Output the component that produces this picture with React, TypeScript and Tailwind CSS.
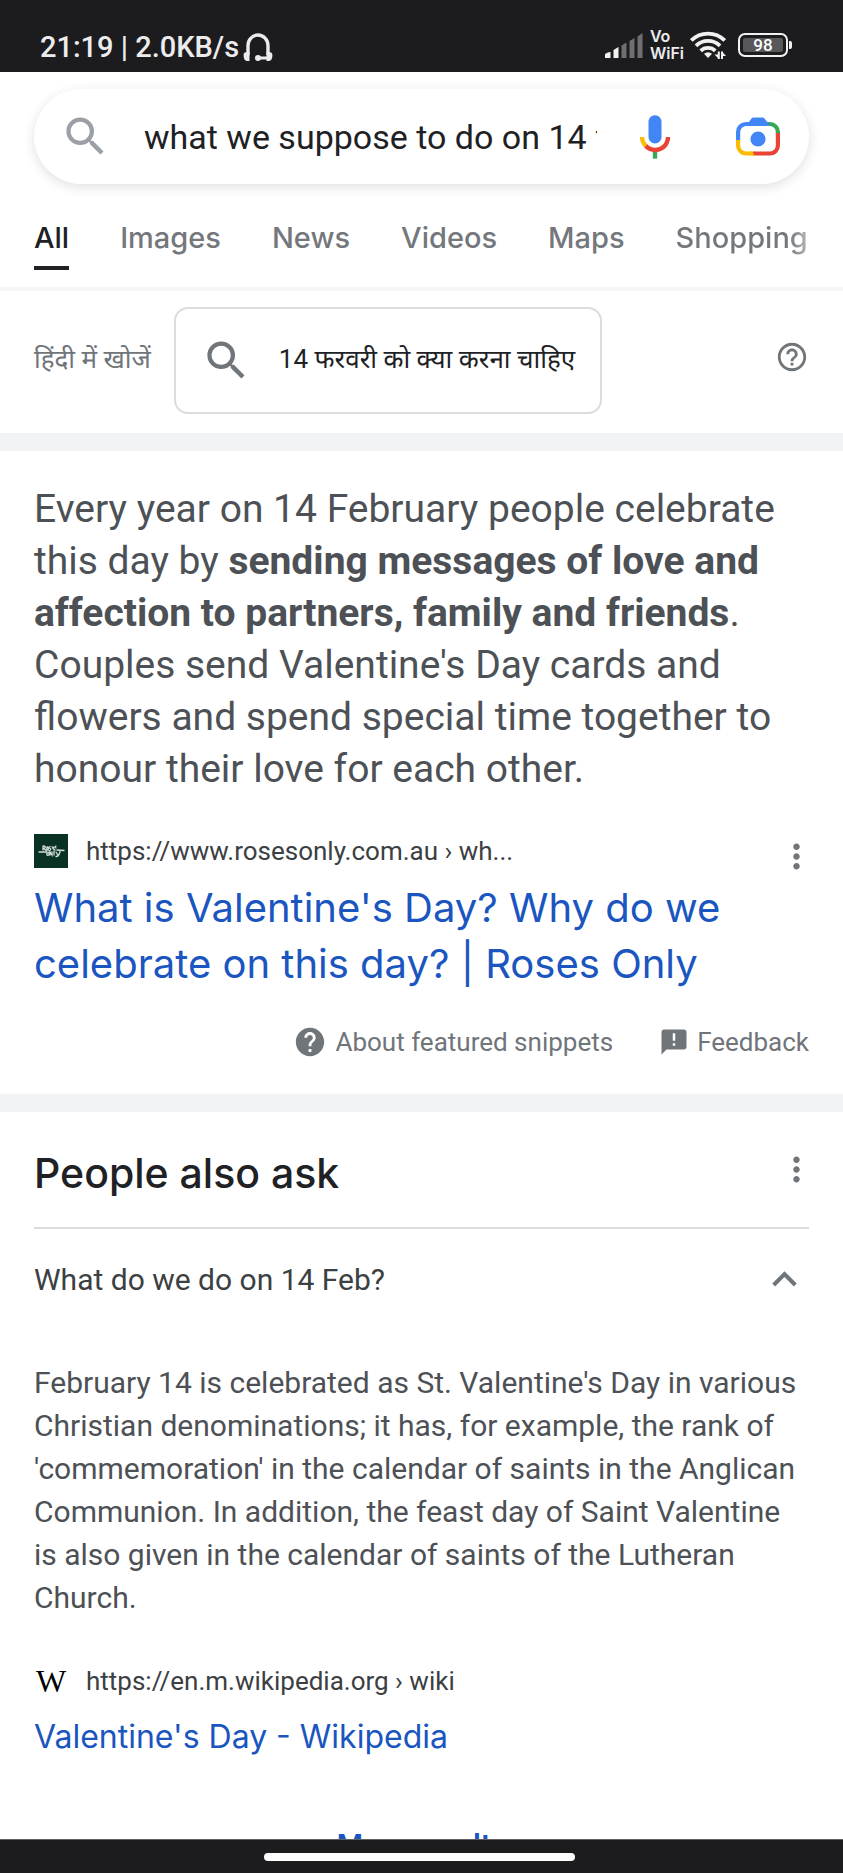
import React, { useState } from "react";
import {
  MdAnnouncement,
  MdExpandLess,
  MdHelp,
  MdHelpOutline,
  MdMoreVert,
  MdSearch,
} from "react-icons/md";

const DISPLAY = "font-[Inter,'Noto_Sans',sans-serif]";

function HeadphonesIcon() {
  return (
    <svg viewBox="0 0 30 28" className="h-[28px] w-[30px]" aria-hidden="true">
      <path
        d="M5 22V12.5a10 10.5 0 0 1 20 0V22"
        fill="none"
        stroke="#ececee"
        strokeWidth="3.4"
      />
      <path
        d="M0.6 22c0-2 1.6-3.2 5.9-3.2V28H5c-3 0-4.4-1.600-4.400-6zM29.400 22c0-2-1.600-3.200-5.900-3.200V28H25c3 0 4.400-1.600 4.400-6z"
        fill="#ececee"
      />
      <path d="M24 25h-7" stroke="#ececee" strokeWidth="3" />
      <circle cx="15" cy="25" r="3" fill="#ececee" />
    </svg>
  );
}

function SignalIcon() {
  return (
    <svg viewBox="0 0 38 25" className="h-[25px] w-[38px]" aria-hidden="true">
      <path d="M0 25v-3.500q1-2 5.500-2.500V25zM8.500 25v-8l5-3V25z" fill="#f1f1f2" />
      <path d="M16.500 25V12.500l5-3V25zM24.500 25V8l5-3V25zM32.500 25V3.500l5-3.500V25z" fill="#6f6f71" />
    </svg>
  );
}

function WifiIcon() {
  return (
    <svg viewBox="0 0 36 28" className="h-[28px] w-[36px]" aria-hidden="true">
      <g fill="none" stroke="#f1f1f2" strokeWidth="3.800">
        <path d="M1.300 9.500a23.500 23.500 0 0 1 33.400 0" />
        <path d="M6 14.800a17 17 0 0 1 24 0" />
        <path d="M10.700 19.800a10.500 10.500 0 0 1 14.600 0" />
      </g>
      <path d="M18 27l-4-4.300a6 6 0 0 1 8 0z" fill="#f1f1f2" />
      <path
        d="M28.800 20.500V28M32 28v-7.500"
        fill="none"
        stroke="#f1f1f2"
        strokeWidth="2"
      />
      <path d="M29 28l-4.500-4.500H29zM32 20.500l4 4.500h-4z" fill="#f1f1f2" />
    </svg>
  );
}

function BatteryIcon() {
  return (
    <span className="flex items-center gap-px">
      <span className="flex h-[24px] w-[50px] rounded-[7px] border-2 border-[#f1f1f2] p-[3px]">
        <span className="flex flex-1 items-center justify-center rounded-[2px] bg-[#58585a] text-[17px] leading-none font-medium text-white">
          98
        </span>
      </span>
      <span className="h-[8px] w-[3px] rounded-r-[2px] bg-[#f1f1f2]" />
    </span>
  );
}

function MicIcon() {
  return (
    <svg viewBox="0 0 24 24" className="size-[52px]" aria-hidden="true">
      <path
        fill="#4285f4"
        d="M12 15c1.660 0 3-1.310 3-2.970V5.010C15 3.350 13.660 2 12 2S9 3.340 9 5.010v7.020C9 13.690 10.340 15 12 15z"
      />
      <path fill="#34a853" d="M11 18.080h2V22h-2z" />
      <path
        fill="#fbbc05"
        d="M7.050 16.870C5.780 15.540 5 14.040 5 12h2c0 1.450.56 2.420 1.470 3.380v.32l-1.150 1.180z"
      />
      <path
        fill="#ea4335"
        d="M12 16.930a4.970 5.250 0 0 1-3.540-1.550l-1.410 1.490C8.310 18.210 10.070 19 12 19c3.870 0 6.990-2.920 6.990-7H17c0 2.920-2.240 4.930-5 4.930z"
      />
    </svg>
  );
}

function LensIcon() {
  return (
    <svg viewBox="0 0 44 40" className="h-[40px] w-[44px]" aria-hidden="true">
      <g fill="none" strokeWidth="4.200">
        <path stroke="#4285f4" d="M2.100 23V15a8 8 0 0 1 8-8H33" />
        <path stroke="#34a853" d="M33 7h1a8 8 0 0 1 7.900 8v1" />
        <path stroke="#fbbc05" d="M2.100 23v5.500a8 8 0 0 0 8 8H18" />
        <path stroke="#ea4335" d="M41.900 16v12.500a8 8 0 0 1-8 8H17" />
      </g>
      <path fill="#fbbc05" d="M14 34.400h2l3 4.200h-5z" />
      <path fill="#4285f4" d="M11 7.500L15.500 1.500Q16 .5 17.500 .5h9q1.500 0 2 1l4.500 6z" />
      <circle cx="22" cy="22" r="7.600" fill="#4285f4" />
    </svg>
  );
}

function RosesIcon() {
  return (
    <svg viewBox="0 0 34 34" className="size-[34px] shrink-0" aria-hidden="true">
      <rect width="34" height="34" fill="#0a3224" />
      <g fill="none" stroke="#d5dfda" strokeWidth="1.300" strokeLinecap="round">
        <path d="M5 18h8M23 16l7 .5M9 12v4M9 12q4 0 1 2.500l2 2M13 13q2 0 1 3q-2 0-1-3M16 12.500q-2 1 0 2t-1 2.500M18 13q3 0 1 1.500l2 1.500M22 12q-2 1 0 2" />
        <path d="M13 19q3-1 2 2q-3 1-2-2M16 21v-3l2 3v-3M20 17v4M22 18l1.500 2.500M26 17.500q-1 5-4 5" />
      </g>
    </svg>
  );
}

function StatusBar() {
  return (
    <header className="flex h-[72px] shrink-0 items-end justify-between bg-[#1c1c1e] px-10 pb-[10px] text-[#ececee]">
      <div className="flex items-center gap-1 text-[29px] leading-[30px] font-medium">
        <span>21:19 | 2.0KB/s</span>
        <HeadphonesIcon />
      </div>
      <div className="flex items-center pr-[11px]">
        <SignalIcon />
        <span
          className={`${DISPLAY} ml-[7px] text-[16px] leading-[17px] font-semibold`}
        >
          <span className="block">Vo</span>
          <span className="block">WiFi</span>
        </span>
        <span className="mr-3 ml-[6px]">
          <WifiIcon />
        </span>
        <BatteryIcon />
      </div>
    </header>
  );
}

function SearchBar() {
  const [query, setQuery] = useState("what we suppose to do on 14 february");
  return (
    <form
      role="search"
      onSubmit={(e) => e.preventDefault()}
      className="mx-[34px] mt-[17px] flex h-[95px] items-center rounded-full bg-white pr-[29px] pl-[26px] shadow-[0_3px_12px_rgba(32,33,36,0.14)]"
    >
      <button type="submit" aria-label="Search" className="text-[#9aa0a6]">
        <MdSearch className="size-[51px]" />
      </button>
      <input
        aria-label="Search query"
        value={query}
        onChange={(e) => setQuery(e.target.value)}
        className="ml-[33px] min-w-0 flex-1 bg-transparent text-[34px] leading-[44px] text-[#202124] outline-none"
      />
      <button type="button" aria-label="Search by voice" className="ml-8">
        <MicIcon />
      </button>
      <button type="button" aria-label="Search with Lens" className="ml-[55px]">
        <LensIcon />
      </button>
    </form>
  );
}

const TABS = ["All", "Images", "News", "Videos", "Maps", "Shopping"];

function tabClass(index: number) {
  if (index === 0) return "border-b-4 border-[#202124] pb-[5px] text-[#202124]";
  if (index === TABS.length - 1)
    return "bg-linear-to-r from-[#74777b] from-85% to-[#b5b7ba] bg-clip-text pb-[9px] text-transparent";
  return "pb-[9px] text-[#74777b]";
}

function Tabs() {
  return (
    <nav
      className={`${DISPLAY} mt-[31px] flex gap-[51px] overflow-hidden border-b-4 border-[#f6f6f7] px-[34px] pb-[17px] text-[29px] leading-[46px] font-medium`}
    >
      {TABS.map((tab, i) => (
        <a
          key={tab}
          href="#"
          aria-current={i === 0 ? "page" : undefined}
          className={tabClass(i)}
        >
          {tab}
        </a>
      ))}
    </nav>
  );
}

function LanguageRow() {
  return (
    <section className="flex items-center px-[34px] pt-4 pb-[19px]">
      <span className="pb-1 text-[26px] leading-[36px] text-[#70757a]">
        हिंदी में खोजें
      </span>
      <a
        href="#"
        className="ml-[23px] flex h-[107px] items-center gap-[27px] rounded-[14px] border-2 border-[#dadce0] px-[25px] text-[26px] leading-[36px] text-[#202124]"
      >
        <MdSearch className="size-[51px] text-[#70757a]" aria-hidden="true" />
        <span className="pb-1">14 फरवरी को क्या करना चाहिए</span>
      </a>
      <button type="button" aria-label="Help" className="ml-auto pb-2 text-[#70757a]">
        <MdHelpOutline className="size-[34px]" />
      </button>
    </section>
  );
}

function Band() {
  return <div className="h-[18px] shrink-0 bg-[#f1f3f4]" />;
}

function MoreButton() {
  return (
    <button
      type="button"
      aria-label="More options"
      className="-mr-[7px] block text-[#70757a]"
    >
      <MdMoreVert className="size-[39px]" />
    </button>
  );
}

function FeaturedSnippet() {
  return (
    <section className="px-[34px] pt-8 pb-[34px]">
      <p className="text-[39px] leading-[52px] text-[#4d5156]">
        Every year on 14 February people celebrate this day by{" "}
        <b className="font-bold">
          sending messages of love and affection to partners, family and friends
        </b>
        . Couples send Valentine's Day cards and flowers and spend special time
        together to honour their love for each other.
      </p>
      <div className="mt-[38px] flex h-[36px] items-center">
        <RosesIcon />
        <span className="ml-[18px] text-[26px] leading-[36px] text-[#3c4043]">
          https://www.rosesonly.com.au › wh...
        </span>
        <span className="ml-auto pt-[10px]">
          <MoreButton />
        </span>
      </div>
      <h3 className={`${DISPLAY} mt-[11px] text-[40px] leading-[56px] text-[#1a55c0]`}>
        <a href="#">
          What is Valentine's Day? Why do we celebrate on this day? | Roses Only
        </a>
      </h3>
      <div className="mt-[32px] flex justify-end gap-[46px] text-[26px] leading-[36px] text-[#70757a]">
        <a href="#" className="flex items-center gap-2">
          <MdHelp className="size-[34px]" aria-hidden="true" />
          About featured snippets
        </a>
        <a href="#" className="flex items-center gap-2">
          <MdAnnouncement className="size-[30px]" aria-hidden="true" />
          Feedback
        </a>
      </div>
    </section>
  );
}

function PeopleAlsoAsk() {
  const [open, setOpen] = useState(true);
  return (
    <section className="px-[34px]">
      <div className="flex items-center justify-between border-b-2 border-[#dadce0] pt-[33px] pb-[26px]">
        <h2
          className={`${DISPLAY} text-[41px] leading-[56px] font-medium text-[#202124]`}
        >
          People also ask
        </h2>
        <span className="pb-2">
          <MoreButton />
        </span>
      </div>
      <button
        type="button"
        aria-expanded={open}
        onClick={() => setOpen(!open)}
        className="flex w-full items-center justify-between py-[26px] text-left text-[30px] leading-[43px] text-[#3c4043]"
      >
        What do we do on 14 Feb?
        <MdExpandLess className="size-[49px] text-[#70757a]" aria-hidden="true" />
      </button>
      {open && (
        <div className="pt-[31px]">
          <p className="text-[30px] leading-[43px] text-[#4d5156]">
            February 14 is celebrated as St. Valentine's Day in various Christian
            denominations; it has, for example, the rank of 'commemoration' in the
            calendar of saints in the Anglican Communion. In addition, the feast day
            of Saint Valentine is also given in the calendar of saints of the
            Lutheran Church.
          </p>
          <div className="mt-[44px] flex items-center gap-[18px] text-[26px] leading-[36px] text-[#3c4043]">
            <span className="w-[34px] text-center font-['Liberation_Serif',serif] text-[32px] text-black">
              W
            </span>
            https://en.m.wikipedia.org › wiki
          </div>
          <h3
            className={`${DISPLAY} mt-[16px] text-[32px] leading-[44px] text-[#1a55c0]`}
          >
            <a href="#">Valentine's Day - Wikipedia</a>
          </h3>
        </div>
      )}
      <div className="mt-[68px] text-center text-[30px] leading-[36px] font-semibold text-[#1a55c0]">
        <a href="#">More results</a>
      </div>
    </section>
  );
}

export default function App() {
  return (
    <div className="flex h-screen flex-col bg-white font-[Roboto,'Noto_Sans',sans-serif]">
      <StatusBar />
      <main className="min-h-0 flex-1 overflow-hidden">
        <SearchBar />
        <Tabs />
        <LanguageRow />
        <Band />
        <FeaturedSnippet />
        <Band />
        <PeopleAlsoAsk />
      </main>
      <footer className="flex h-[34px] shrink-0 items-center justify-center border-t border-[#5f5f61] bg-[#1c1c1e] pr-1">
        <span className="h-2 w-[37%] rounded-full bg-white" />
      </footer>
    </div>
  );
}
